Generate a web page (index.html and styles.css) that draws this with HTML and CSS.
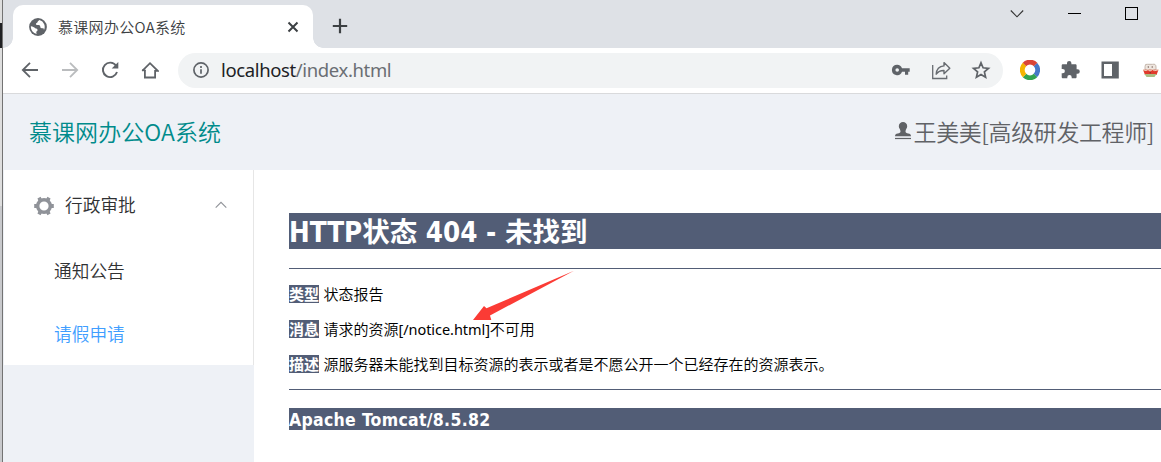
FILE: index.html
```html
<!DOCTYPE html>
<html lang="zh-CN">
<head>
<meta charset="utf-8">
<title>慕课网办公OA系统</title>
<link rel="stylesheet" href="styles.css">
</head>
<body>
<div class="desktop">
  <div class="edge"><div class="edge-dark"></div><div class="edge-low"></div></div>
  <div class="window">
    <div class="tabstrip">
      <div class="tab">
        <svg class="globe" width="18" height="18" viewBox="0 0 18 18"><circle cx="9" cy="9" r="8.900" fill="#5f6368"/><path d="M10.500 1.900c-.9 1-1.800 1-1.900 2.100-.1 1-1.600.8-1.700 2 0 1 1.200 1.100 2.700 1.100 1.500.1 1.700 1 1.700 2 .1 1.300 1.600 1.200 2.700 1.200 1 .1 1.100 1.300.6 2.300A7.200 7.200 0 0 0 10.500 1.900zM1.900 8.200c1.900.3 3.300.9 4.200 1.900.5.700 1.700.5 2.200 1.200.7 1-.2 1.800-.8 2.300-.4.500-.2 1.400.2 2.400A7.200 7.200 0 0 1 1.900 8.200z" fill="#fff"/></svg>
        <span class="tab-title">慕课网办公OA系统</span>
        <svg class="tab-close" width="12" height="12" viewBox="0 0 12 12"><path d="M1.500 1.500l9 9M10.500 1.500l-9 9" stroke="#3c4043" stroke-width="2"/></svg>
      </div>
      <svg class="new-tab" width="16" height="16" viewBox="0 0 16 16"><path d="M8 .8v14.400M.8 8h14.400" stroke="#3c4043" stroke-width="2.200"/></svg>
      <div class="controls">
        <svg width="14" height="28" viewBox="0 0 14 28"><path d="M.8 10.500L7 16.800l6.200-6.300" fill="none" stroke="#333" stroke-width="1.100"/></svg>
        <svg width="13" height="28" viewBox="0 0 13 28"><path d="M0 13.500h13" stroke="#000"/></svg>
        <svg width="13" height="28" viewBox="0 0 13 28"><rect x=".5" y="7.500" width="12" height="12" fill="none" stroke="#000"/></svg>
      </div>
    </div>
    <div class="toolbar">
      <div class="nav">
        <svg width="18" height="18" viewBox="0 0 18 18"><path d="M17 9H2.500M9 1.800L1.800 9 9 16.200" fill="none" stroke="#5f6368" stroke-width="1.800"/></svg>
        <svg width="18" height="18" viewBox="0 0 18 18"><path d="M1 9h14.500M9 1.800L16.200 9 9 16.200" fill="none" stroke="#babcbe" stroke-width="1.800"/></svg>
        <svg width="18" height="18" viewBox="0 0 18 18"><path d="M15 4.700A7.200 7.200 0 1 0 16 11" fill="none" stroke="#5f6368" stroke-width="1.900"/><path d="M17.300 1v6.600h-6.600z" fill="#5f6368"/></svg>
        <svg width="18" height="18" viewBox="0 0 18 18"><path d="M3.900 9v7.500h10.200V9M1.300 9.800L9 2.200l7.700 7.600H14" fill="none" stroke="#5f6368" stroke-width="1.800"/><path d="M1 9.300h3.500" stroke="#5f6368" stroke-width="1.600"/></svg>
      </div>
      <div class="omnibox">
        <svg class="info" width="16" height="16" viewBox="0 0 16 16"><circle cx="8" cy="8" r="7.100" fill="none" stroke="#5f6368" stroke-width="1.700"/><path d="M8 7.200v4.600M8 4.100v1.800" stroke="#5f6368" stroke-width="1.700"/></svg>
        <span class="url">localhost<span class="path">/index.html</span></span>
        <div class="actions">
          <svg width="20" height="20" viewBox="0 0 20 20"><path d="M6.200 4.800a5.200 5.200 0 1 0 4.800 7h3v3h3.200v-3h1.500V8.200H11a5.200 5.200 0 0 0-4.800-3.400zm0 3.400a1.800 1.800 0 1 1 0 3.600 1.800 1.800 0 0 1 0-3.600z" fill="#5f6368" fill-rule="evenodd"/></svg>
          <svg width="20" height="20" viewBox="0 0 20 20"><path d="M1.700 5v13.500h14v-3" fill="none" stroke="#686c71" stroke-width="1.300"/><path d="M13 2.600L18.800 8.200 13 13.800v-3.300c-4-.1-6 1.200-7.800 3.700.3-5 3-7.900 7.800-8.300z" fill="none" stroke="#686c71" stroke-width="1.400" stroke-linejoin="round"/></svg>
          <svg width="20" height="20" viewBox="0 0 20 20"><path d="M10 2.800l2.100 5 5.400.5-4.100 3.600 1.200 5.300-4.600-2.800-4.600 2.800 1.200-5.300-4.100-3.600 5.400-.5z" fill="none" stroke="#5f6368" stroke-width="1.700"/></svg>
        </div>
      </div>
      <div class="extensions">
        <svg width="20" height="20" viewBox="0 0 20 20" fill="none" stroke-width="4.800"><path d="M4.300 4.600A7.700 7.700 0 0 1 15.700 4.600" stroke="#db4437"/><path d="M15.500 4.600A7.700 7.700 0 0 1 15.300 15.600" stroke="#4678c8"/><path d="M15.500 15.500A7.700 7.700 0 0 1 4.500 15.500" stroke="#31a350"/><path d="M4.600 15.500A7.700 7.700 0 0 1 4.500 4.500" stroke="#f4b400"/></svg>
        <svg width="20" height="20" viewBox="0 0 20 20"><path d="M7 4.200V3.100a2.200 2.200 0 0 1 4.400 0v1.100h3.900c.8 0 1.300.5 1.300 1.300v3.800h1a2.200 2.200 0 0 1 0 4.400h-1V17c0 .8-.5 1.300-1.300 1.300h-3.600v-1a2.200 2.200 0 0 0-4.400 0v1H3c-.8 0-1.300-.5-1.300-1.300v-3.700h1a2.200 2.200 0 0 0 0-4.400h-1V5.500c0-.8.5-1.300 1.300-1.300z" fill="#5f6368"/></svg>
        <svg width="20" height="20" viewBox="0 0 20 20"><path d="M1.500 1.500h17.300v17H1.500zM4 4v12h8V4z" fill="#5f6368" fill-rule="evenodd"/></svg>
        <svg width="20" height="20" viewBox="0 0 20 20"><path d="M5 10V6.500Q5 3.500 7.500 4.300h5Q16 3.500 16 7v3z" fill="#eee6df" stroke="#b8a79c" stroke-width=".8"/><circle cx="8.300" cy="7" r=".7" fill="#705850"/><circle cx="12.200" cy="7" r=".7" fill="#705850"/><path d="M3 9.800h15.500l-2 5.200H5z" fill="#e03a2b"/><path d="M4.500 14h12l-2 3h-8z" fill="#a9bd83"/><path d="M3 9.800l3 .7 2-.9L10 11l2.500-1.400 2 1 4-.8" fill="none" stroke="#f0d8c4"/><circle cx="10.200" cy="12.800" r=".7" fill="#71362e"/></svg>
      </div>
    </div>
    <header class="app-header">
      <span class="brand">慕课网办公OA系统</span>
      <span class="user"><svg width="18" height="18" viewBox="0 0 18 18"><path d="M9 0a4.200 4.200 0 0 1 4.200 4.200c0 2.300-1.700 2.800-1.700 5.300 0 1.300 1 1.700 2.800 1.900 1.700.2 2.700 1 2.700 2.800H1c0-1.800 1-2.600 2.700-2.800 1.800-.2 2.800-.6 2.800-1.900C6.500 7 4.800 6.500 4.800 4.200A4.200 4.200 0 0 1 9 0z" fill="#606266"/><path d="M1 16.500h16" stroke="#606266" stroke-width="1.200"/></svg><span class="user-name">王美美[高级研发工程师]</span></span>
    </header>
    <div class="app-body">
      <aside class="sidebar">
        <ul class="menu">
          <li class="group"><svg class="gear" width="20" height="20" viewBox="0 0 20 20"><circle cx="10" cy="10" r="6.300" fill="none" stroke="#909399" stroke-width="3.400"/><path d="M.2 8h3.500v4H.2zM16.300 8h3.500v4h-3.500zM3.400 2.500l3.200-1.700 1.600 3.100-3.200 1.800zM16.600 2.500L13.400.8l-1.600 3.100L15 5.700zM3.400 17.500l3.200 1.700 1.600-3.100L5 14.300zM16.600 17.500l-3.200 1.700-1.600-3.100 3.200-1.800z" fill="#909399"/></svg><span class="menu-text">行政审批</span><svg class="caret" width="12" height="8" viewBox="0 0 12 8"><path d="M.7 6.700L6 1.300l5.300 5.400" fill="none" stroke="#909399" stroke-width="1.100"/></svg></li>
          <li class="item"><span class="menu-text">通知公告</span></li>
          <li class="item active"><span class="menu-text">请假申请</span></li>
        </ul>
      </aside>
      <main class="report">
        <h1><span class="h1-text">HTTP状态 404 - 未找到</span></h1>
        <hr>
        <p><b>类型</b> <span>状态报告</span></p>
        <p><b>消息</b> <span>请求的资源<span class="latin">[/notice.html]</span>不可用</span></p>
        <p><b>描述</b> <span>源服务器未能找到目标资源的表示或者是不愿公开一个已经存在的资源表示。</span></p>
        <hr>
        <h3><span class="h3-text">Apache Tomcat/8.5.82</span></h3>
        <svg class="arrow" width="104" height="54" viewBox="0 0 104 54"><path d="M103 .8L15.500 38.300 13 36 2 50h18.300l-1.300-4.500z" fill="#fb3b35"/></svg>
      </main>
    </div>
  </div>
</div>
</body>
</html>
```
FILE: styles.css
```css
* { box-sizing: border-box; }
body { margin: 0; overflow: hidden; background: #fff; font-family: "Noto Sans", "Noto Sans CJK SC", sans-serif; }
svg { display: block; flex: none; }
.desktop { display: flex; width: 1161px; height: 462px; }
.edge { width: 3px; background: #dedede; border-right: 1px solid #737373; padding-top: 23px; display: flex; flex-direction: column; }
.edge-dark { height: 25px; background: #202124; }
.edge-low { margin-top: 158px; flex: 1; background: #c8c9cc; }
.window { flex: 1; min-width: 0; display: flex; flex-direction: column; }

.tabstrip { height: 48px; background: #dee1e6; display: flex; align-items: flex-start; padding-left: 10px; }
.tab { position: relative; margin-top: 5px; width: 300px; height: 43px; background: #fff; border-radius: 10px 10px 0 0; display: flex; align-items: center; padding: 0 14px 0 16px; }
.tab::before, .tab::after { content: ""; position: absolute; bottom: 0; width: 10px; height: 10px; }
.tab::before { left: -10px; background: radial-gradient(circle at 0 0, #dee1e6 9.500px, #fff 10px); }
.tab::after { right: -10px; background: radial-gradient(circle at 100% 0, #dee1e6 9.500px, #fff 10px); }
.tab-title { margin-left: 11px; font-size: 15px; line-height: 20px; color: #3c4043; letter-spacing: .3px; white-space: nowrap; font-family: "Noto Sans CJK SC", sans-serif; font-weight: 350; }
.tab-close { margin-left: auto; }
.new-tab { margin: 18px 0 0 19px; }
.controls { margin-left: auto; display: flex; gap: 44px; padding-right: 23px; }

.toolbar { height: 46px; background: #fff; border-bottom: 1px solid #d9dadc; display: flex; align-items: center; padding: 0 0 1px 18px; }
.nav { display: flex; gap: 22px; }
.omnibox { margin-left: 19px; width: 825px; height: 35px; border-radius: 18px; background: #f1f3f4; display: flex; align-items: center; padding: 0 12px 0 15px; }
.url { margin-left: 12px; font-size: 18.500px; line-height: 24px; color: #202124; white-space: nowrap; letter-spacing: -.37px; }
.path { color: #6a6e73; }
.actions { margin-left: auto; display: flex; gap: 20px; }
.extensions { display: flex; gap: 20px; margin-left: 17px; }

.app-header { height: 76px; background: #eef1f6; display: flex; align-items: center; justify-content: space-between; padding: 0 7px 2px 26px; font-weight: 350; font-family: "Noto Sans CJK SC", sans-serif; }
.brand { font-size: 23px; color: #008b8b; letter-spacing: .05px; }
.user { display: flex; align-items: center; gap: 2px; font-size: 23px; color: #606266; letter-spacing: -.4px; }
.app-body { flex: 1; display: flex; min-height: 0; }
.sidebar { width: 251px; background: #eef1f6; border-left: 1px solid #eef1f6; flex: none; }
.menu { list-style: none; margin: 0; padding: 0; height: 195px; background: #fff; border-right: 1px solid #e6e6e6; font-family: "Noto Sans CJK SC", sans-serif; font-size: 17.700px; font-weight: 350; color: #303133; }
.group { height: 70px; display: flex; align-items: center; padding: 0 26px 0 30px; }
.gear { margin-top: 2px; }
.group .menu-text { margin-left: 11px; }
.menu-text { padding-bottom: 2px; }
.caret { margin-left: auto; }
.item { height: 63px; display: flex; align-items: center; padding-left: 50px; }
.item .menu-text { padding-bottom: 3px; }
.active { color: #409eff; }

.report { position: relative; flex: 1; padding: 43px 0 0 35px; font-family: "DejaVu Sans Condensed", "Noto Sans CJK SC", sans-serif; color: #000; }
h1, h3, p { margin: 0; white-space: nowrap; }
h1 { height: 36px; line-height: 38px; font-size: 27.500px; background: #525d76; color: #fff; }
hr { height: 1px; border: 0; background: #525d76; margin: 19px 0 16px; }
p { height: 18px; line-height: 20px; font-size: 15px; margin-bottom: 17px; display: flex; font-weight: 350; }
p b { height: 18px; background: #525d76; color: #fff; margin-right: 4.500px; font-weight: 700; }
p .latin { font-family: "Noto Sans", sans-serif; font-size: 14.500px; line-height: 18px; font-weight: 400; letter-spacing: -.06px; }
p:last-of-type { margin-bottom: 0; }
p + hr { margin: 16px 0 18px; }
h3 { height: 22px; line-height: 24px; font-size: 17.500px; letter-spacing: .3px; background: #525d76; color: #fff; }
.arrow { position: absolute; left: 217px; top: 100px; }
```
